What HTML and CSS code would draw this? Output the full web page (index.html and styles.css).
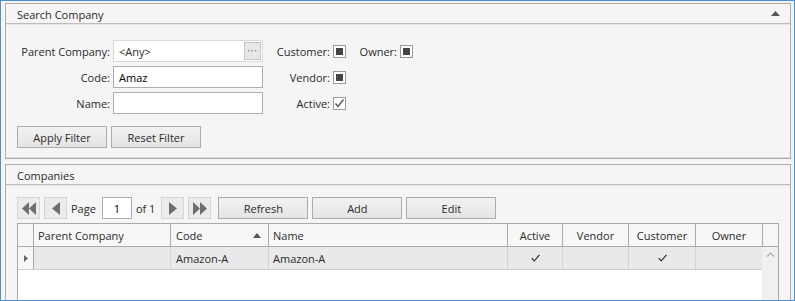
FILE: index.html
```html
<!DOCTYPE html>
<html lang="en">
<head>
  <meta charset="UTF-8" />
  <title>Search Company</title>
  <link rel="stylesheet" href="styles.css">
</head>
<body>
  <div class="window">
    <section class="panel search">
      <div class="panel-head">
        <span>Search Company</span>
        <svg class="caret" width="9" height="5" viewBox="0 0 9 5"><polygon points="0,5 4.5,0 9,5" fill="#555"/></svg>
      </div>
      <div class="panel-body">
        <div class="filters">
          <label>Parent Company:</label>
          <div class="field picker">
            <span>&lt;Any&gt;</span>
            <span class="dots"><svg width="9" height="2" viewBox="0 0 9 2"><rect x="0" y="0" width="1.5" height="1.5" fill="#999"/><rect x="3.5" y="0" width="1.5" height="1.5" fill="#999"/><rect x="7" y="0" width="1.5" height="1.5" fill="#999"/></svg></span>
          </div>
          <label>Customer:</label>
          <span class="chk partial"></span>
          <label>Owner:</label>
          <span class="chk partial"></span>

          <label>Code:</label>
          <div class="field">Amaz</div>
          <label>Vendor:</label>
          <span class="chk partial"></span>
          <span></span><span></span>

          <label>Name:</label>
          <div class="field"></div>
          <label>Active:</label>
          <span class="chk"><svg width="11" height="11" viewBox="0 0 11 11"><path d="M1.5 5.5 L4 8.5 L9.5 1.5" fill="none" stroke="#555" stroke-width="1.4"/></svg></span>
          <span></span><span></span>
        </div>
        <div class="actions">
          <button class="btn">Apply Filter</button>
          <button class="btn">Reset Filter</button>
        </div>
      </div>
    </section>

    <section class="panel companies">
      <div class="panel-head">
        <span>Companies</span>
      </div>
      <div class="panel-body">
        <div class="pager">
          <span class="pg"><svg width="14" height="13" viewBox="0 0 14 13"><polygon points="7,0 0,6.5 7,13" fill="#6e6e6e"/><polygon points="14,0 7,6.5 14,13" fill="#6e6e6e"/></svg></span>
          <span class="pg"><svg width="8" height="13" viewBox="0 0 8 13"><polygon points="8,0 0,6.5 8,13" fill="#6e6e6e"/></svg></span>
          <span class="pg-label">Page</span>
          <span class="pg-input">1</span>
          <span class="pg-label">of 1</span>
          <span class="pg"><svg width="8" height="13" viewBox="0 0 8 13"><polygon points="0,0 8,6.5 0,13" fill="#6e6e6e"/></svg></span>
          <span class="pg"><svg width="14" height="13" viewBox="0 0 14 13"><polygon points="0,0 7,6.5 0,13" fill="#6e6e6e"/><polygon points="7,0 14,6.5 7,13" fill="#6e6e6e"/></svg></span>
          <button class="btn refresh">Refresh</button>
          <button class="btn">Add</button>
          <button class="btn">Edit</button>
        </div>

        <div class="grid">
          <div class="grid-head">
            <div class="cell"></div>
            <div class="cell">Parent Company</div>
            <div class="cell sorted">Code <svg width="8" height="5" viewBox="0 0 8 5"><polygon points="0,5 4,0 8,5" fill="#555"/></svg></div>
            <div class="cell">Name</div>
            <div class="cell center">Active</div>
            <div class="cell center">Vendor</div>
            <div class="cell center">Customer</div>
            <div class="cell center">Owner</div>
            <div class="cell last"></div>
          </div>
          <div class="grid-body">
            <div class="rows">
              <div class="row">
                <div class="cell indicator"><svg width="4" height="7" viewBox="0 0 4 7"><polygon points="0,0 4,3.5 0,7" fill="#666"/></svg></div>
                <div class="cell"></div>
                <div class="cell">Amazon-A</div>
                <div class="cell">Amazon-A</div>
                <div class="cell center"><svg width="9" height="8" viewBox="0 0 9 8"><path d="M0.8 4.2 L3.2 7 L8.4 0.8" fill="none" stroke="#222" stroke-width="1.1"/></svg></div>
                <div class="cell center"></div>
                <div class="cell center"><svg width="9" height="8" viewBox="0 0 9 8"><path d="M0.8 4.2 L3.2 7 L8.4 0.8" fill="none" stroke="#222" stroke-width="1.1"/></svg></div>
                <div class="cell center"></div>
              </div>
            </div>
            <div class="vscroll">
              <svg width="9" height="5" viewBox="0 0 9 5"><path d="M1 4.5 L4.5 1 L8 4.5" fill="none" stroke="#aaa" stroke-width="1.2"/></svg>
            </div>
          </div>
        </div>
      </div>
    </section>
  </div>
</body>
</html>
```

FILE: styles.css
```css
* {
  box-sizing: border-box;
}
html, body {
  margin: 0;
  padding: 0;
  background: #f5f5f5;
  overflow: hidden;
}
body {
  font-family: "Open Sans", "Noto Sans", sans-serif;
  font-size: 11px;
  color: #2b2b2b;
}
.window {
  width: 795px;
  height: 301px;
  border: 1px solid #4a8fdb;
  padding: 2px 3px 0 4px;
  display: flex;
  flex-direction: column;
  gap: 5px;
  overflow: hidden;
}
.panel {
  border: 1px solid #acacac;
  background: #f5f5f5;
}
.panel-head {
  height: 20px;
  padding: 1px 10px 0 11px;
  border-bottom: 1px solid #bdbdbd;
  box-shadow: 0 1px 0 #e4e4e4;
  display: flex;
  align-items: center;
  justify-content: space-between;
}
.caret {
  margin-top: -1px;
}
.search .panel-body {
  padding: 16px 11px 10px;
}
.search {
  border-bottom-color: #a8a8a8;
  box-shadow: inset 0 -1px 0 #dcdcdc;
}

/* filter form */
.filters {
  display: grid;
  grid-template-columns: 96px 150px 70px 13px 54px 13px;
  grid-auto-rows: 22px;
  row-gap: 4px;
  align-items: center;
}
.filters label {
  text-align: right;
  padding-right: 3px;
}
.field {
  height: 22px;
  border: 1px solid #abadb3;
  background: #fff;
  color: #000;
  padding: 0 5px;
  display: flex;
  align-items: center;
}
.picker {
  border-color: #d9d9d9;
  justify-content: space-between;
  padding-right: 1px;
  color: #2b2b2b;
}
.dots {
  width: 17px;
  height: 18px;
  border: 1px solid #c3c3c3;
  background: #e8e8e8;
  display: flex;
  align-items: center;
  justify-content: center;
}
.chk {
  width: 13px;
  height: 13px;
  border: 1px solid #9a9a9a;
  background: #fff;
  display: flex;
  align-items: center;
  justify-content: center;
}
.chk.partial::after {
  content: "";
  width: 7px;
  height: 7px;
  background: #444;
}
.actions {
  display: flex;
  gap: 4px;
  margin-top: 12px;
}
.btn {
  width: 90px;
  height: 22px;
  border: 1px solid #acacac;
  background: linear-gradient(#f2f2f2, #e4e4e4);
  font-family: inherit;
  font-size: 11px;
  color: #2b2b2b;
  padding: 0;
}

/* companies */
.companies {
  flex: 1;
  border-bottom: 0;
  display: flex;
  flex-direction: column;
}
.companies .panel-body {
  flex: 1;
  padding: 12px 11px 0;
  display: flex;
  flex-direction: column;
  gap: 4px;
}
.pager {
  display: flex;
  align-items: center;
  height: 22px;
}
.pg {
  width: 23px;
  height: 22px;
  border: 1px solid #d6d6d6;
  background: #ebebeb;
  display: flex;
  align-items: center;
  justify-content: center;
  margin-right: 4px;
}
.pg-label {
  margin-right: 6px;
}
.pg-input {
  width: 30px;
  height: 22px;
  border: 1px solid #abadb3;
  background: #fff;
  color: #000;
  display: flex;
  align-items: center;
  justify-content: center;
  margin-right: 4px;
}
.pager .btn {
  margin-right: 4px;
}
.pager .refresh {
  margin-left: 3px;
}

/* data grid */
.grid {
  flex: 1;
  border: 1px solid #a9a9a9;
  border-bottom: 0;
  background: #fff;
  display: flex;
  flex-direction: column;
}
.grid-head {
  display: grid;
  grid-template-columns: 16px 137px 98px 239px 55px 66px 67px 67px 1fr;
  height: 23px;
  background: #f7f7f7;
  border-bottom: 1px solid #a9a9a9;
}
.grid-head .cell {
  border-right: 1px solid #a9a9a9;
  padding: 0 4px;
  display: flex;
  align-items: center;
}
.grid-head .cell.last {
  border-right: 0;
}
.grid-head .sorted {
  justify-content: space-between;
  padding: 0 7px 0 5px;
}
.cell.center {
  justify-content: center;
}
.grid-body {
  flex: 1;
  display: flex;
}
.rows {
  flex: 1;
}
.row {
  display: grid;
  grid-template-columns: 16px 137px 98px 239px 55px 66px 67px 1fr;
  height: 23px;
  background: #e9e9e9;
  border-bottom: 1px solid #cfcfcf;
}
.row .cell {
  border-right: 1px solid #d4d4d4;
  padding: 0 5px;
  display: flex;
  align-items: center;
}
.row .cell:last-child {
  border-right: 0;
}
.row .indicator {
  background: #f7f7f7;
  border-right-color: #a9a9a9;
  padding: 0 0 0 6px;
}
.row .cell:nth-child(4) {
  padding-left: 4px;
}
.vscroll {
  width: 16px;
  background: #f0f0f0;
  display: flex;
  justify-content: center;
  padding-top: 5px;
}
```
